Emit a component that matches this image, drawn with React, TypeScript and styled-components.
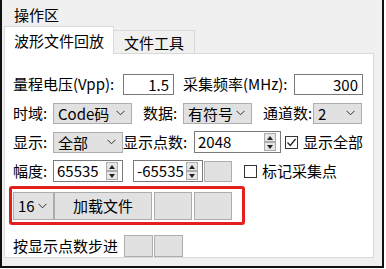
import React from "react";
import styled, { createGlobalStyle } from "styled-components";

const Global = createGlobalStyle`
  html, body { margin: 0; padding: 0; background: #ffffff; }
  body { font-family: "Noto Sans CJK SC", "Noto Sans", sans-serif; font-size: 15px; color: #000; }
`;

const Frame = styled.div`
  box-sizing: border-box;
  width: 384px;
  height: 268px;
  background: #f0f0f0;
  border-left: 2px solid #111;
  border-right: 2px solid #111;
  border-bottom: 2px solid #111;
  padding: 0 8px 0 2px;
  display: flex;
  flex-direction: column;
  overflow: hidden;
`;

const GroupLabel = styled.div`
  height: 26px;
  padding-left: 10px;
  line-height: 30px;
  font-size: 15px;
`;

const TabStrip = styled.div`
  display: flex;
  align-items: flex-end;
  height: 28px;
  margin-bottom: -1px;
  position: relative;
  z-index: 1;
`;

const Tab = styled.div<{ $active?: boolean }>`
  box-sizing: border-box;
  height: ${(p) => (p.$active ? 28 : 24)}px;
  padding: 0 ${(p) => (p.$active ? 9 : 10)}px;
  background: ${(p) => (p.$active ? "#ffffff" : "#f0f0f0")};
  border: 1px solid #d9d9d9;
  border-bottom: ${(p) => (p.$active ? "none" : "1px solid #d9d9d9")};
  margin-left: ${(p) => (p.$active ? 0 : -1)}px;
  display: flex;
  align-items: center;
  font-size: 15px;
  white-space: nowrap;
`;

const Panel = styled.div`
  box-sizing: border-box;
  width: 370px;
  height: 205px;
  background: #ffffff;
  border: 1px solid #d9d9d9;
  padding: 19px 0 0 8px;
  display: flex;
  flex-direction: column;
  gap: 7px;
  overflow: hidden;
`;

const Row = styled.div<{ $mt?: number }>`
  display: flex;
  align-items: center;
  height: 22px;
  margin-top: ${(p) => p.$mt ?? 0}px;
`;

const Label = styled.span<{ $w?: number; $ml?: number }>`
  display: inline-block;
  width: ${(p) => (p.$w ? `${p.$w}px` : "auto")};
  margin-left: ${(p) => p.$ml ?? 0}px;
  white-space: nowrap;
  font-size: 15px;
  line-height: 22px;
`;

const TextBox = styled.div<{ $w: number; $ml?: number }>`
  box-sizing: border-box;
  width: ${(p) => p.$w}px;
  height: 21px;
  margin-left: ${(p) => p.$ml ?? 0}px;
  border: 1px solid #7a7a7a;
  background: #fff;
  text-align: right;
  padding-right: 4px;
  line-height: 19px;
  font-size: 15px;
`;

const SelectBox = styled.div<{ $w: number; $h?: number; $ml?: number }>`
  box-sizing: border-box;
  width: ${(p) => p.$w}px;
  height: ${(p) => p.$h ?? 21}px;
  margin-left: ${(p) => p.$ml ?? 0}px;
  background: #e1e1e1;
  border: 1px solid #adadad;
  display: flex;
  align-items: center;
  justify-content: space-between;
  padding: 0 6px 0 4px;
  font-size: 15px;
  white-space: nowrap;
`;

const NumBox = styled.div<{ $w: number; $ml?: number }>`
  box-sizing: border-box;
  width: ${(p) => p.$w}px;
  height: 22px;
  margin-left: ${(p) => p.$ml ?? 0}px;
  border: 1px solid #7a7a7a;
  background: #fff;
  display: flex;
  align-items: stretch;
  padding: 1px;
`;

const NumText = styled.span`
  flex: 1;
  padding-left: 2px;
  line-height: 18px;
  font-size: 15px;
`;

const Spinner = styled.div`
  width: 12px;
  display: flex;
  flex-direction: column;
  margin-right: 3px;
`;

const SpinBtn = styled.div`
  flex: 1;
  box-sizing: border-box;
  background: #e6e6e6;
  border: 1px solid #adadad;
  display: flex;
  align-items: center;
  justify-content: center;
`;

const Check = styled.div<{ $ml?: number }>`
  box-sizing: border-box;
  width: 13px;
  height: 13px;
  margin-left: ${(p) => p.$ml ?? 0}px;
  margin-right: 5px;
  border: 1px solid #333;
  background: #fff;
  display: flex;
  align-items: center;
  justify-content: center;
`;

const Button = styled.div<{ $w: number; $h?: number; $ml?: number }>`
  box-sizing: border-box;
  width: ${(p) => p.$w}px;
  height: ${(p) => p.$h ?? 21}px;
  margin-left: ${(p) => p.$ml ?? 0}px;
  background: #e1e1e1;
  border: 1px solid #adadad;
  display: flex;
  align-items: center;
  justify-content: center;
  font-size: 15px;
  white-space: nowrap;
`;

const RedBox = styled.div`
  box-sizing: border-box;
  width: 236px;
  height: 42px;
  margin: -3px 0 -1px -4px;
  border: 3px solid #e3201d;
  border-radius: 3px;
  padding: 0 0 0 1px;
  display: flex;
  align-items: center;
`;

const Chevron = () => (
  <svg width="9" height="6" viewBox="0 0 9 6">
    <path d="M0.5 0.8 L4.5 4.8 L8.5 0.8" fill="none" stroke="#333" strokeWidth="1" />
  </svg>
);

const Up = () => (
  <svg width="6" height="4" viewBox="0 0 6 4">
    <path d="M0 4 L3 0 L6 4 Z" fill="#222" />
  </svg>
);
const Down = () => (
  <svg width="6" height="4" viewBox="0 0 6 4">
    <path d="M0 0 L3 4 L6 0 Z" fill="#222" />
  </svg>
);

const Tick = () => (
  <svg width="11" height="11" viewBox="0 0 11 11">
    <path d="M1.5 5.5 L4.3 8.5 L9.5 2" fill="none" stroke="#222" strokeWidth="1.3" />
  </svg>
);

const Select: React.FC<{ w: number; h?: number; ml?: number; value: string }> = ({ w, h, ml, value }) => (
  <SelectBox $w={w} $h={h} $ml={ml}>
    <span>{value}</span>
    <Chevron />
  </SelectBox>
);

const Numeric: React.FC<{ w: number; ml?: number; value: string }> = ({ w, ml, value }) => (
  <NumBox $w={w} $ml={ml}>
    <NumText>{value}</NumText>
    <Spinner>
      <SpinBtn><Up /></SpinBtn>
      <SpinBtn><Down /></SpinBtn>
    </Spinner>
  </NumBox>
);

export default function App() {
  return (
    <>
      <Global />
      <Frame>
        <GroupLabel>操作区</GroupLabel>
        <TabStrip>
          <Tab $active>波形文件回放</Tab>
          <Tab>文件工具</Tab>
        </TabStrip>
        <Panel>
          <Row>
            <Label $w={110}>量程电压(Vpp):</Label>
            <TextBox $w={51}>1.5</TextBox>
            <Label $w={111} $ml={9}>采集频率(MHz):</Label>
            <TextBox $w={69}>300</TextBox>
          </Row>
          <Row>
            <Label $w={40}>时域:</Label>
            <Select w={79} value="Code码" />
            <Label $w={40} $ml={11}>数据:</Label>
            <Select w={69} value="有符号" />
            <Label $w={50} $ml={11}>通道数:</Label>
            <Select w={49} value="2" />
          </Row>
          <Row>
            <Label $w={40}>显示:</Label>
            <Select w={70} value="全部" />
            <Label $w={71}>显示点数:</Label>
            <Numeric w={87} value="2048" />
            <Check $ml={4}><Tick /></Check>
            <Label>显示全部</Label>
          </Row>
          <Row>
            <Label $w={40}>幅度:</Label>
            <Numeric w={70} value="65535" />
            <Numeric w={70} ml={10} value="-65535" />
            <Button $w={28} $ml={1} />
            <Check $ml={12} />
            <Label>标记采集点</Label>
          </Row>
          <RedBox>
            <Select w={41} h={28} value="16" />
            <Button $w={98} $h={28}>加载文件</Button>
            <Button $w={38} $h={28} $ml={2} />
            <Button $w={38} $h={28} $ml={2} />
          </RedBox>
          <Row $mt={4}>
            <Label $w={111}>按显示点数步进</Label>
            <Button $w={29} $h={22} />
            <Button $w={29} $h={22} $ml={1} />
          </Row>
        </Panel>
      </Frame>
    </>
  );
}
